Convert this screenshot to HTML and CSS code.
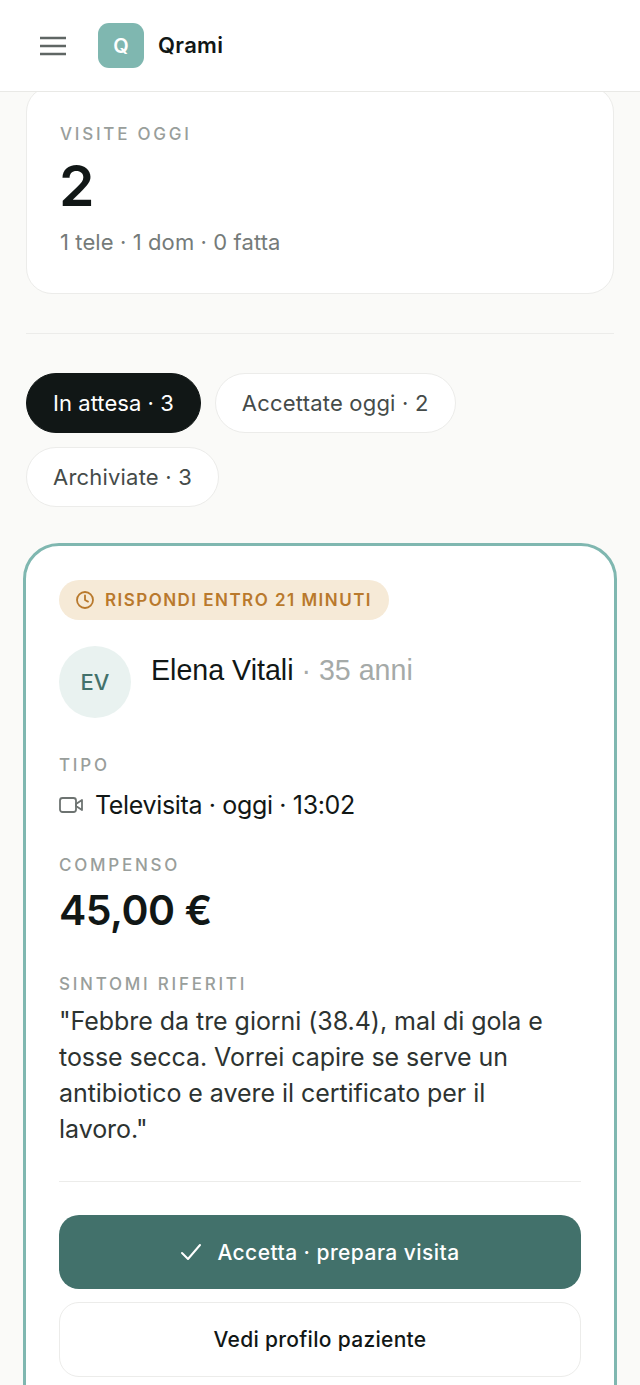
FILE: index.html
```html
<!DOCTYPE html>
<html lang="it">
<head>
<meta charset="utf-8">
<title>Qrami</title>
<link rel="stylesheet" href="styles.css">
</head>
<body>
<header class="topbar">
  <svg class="menu" width="26" height="20" viewBox="0 0 26 20" fill="none" stroke="#5f6664" stroke-width="2.4"><path d="M0 2h26M0 10h26M0 18h26"/></svg>
  <div class="logo">Q</div>
  <div class="brand">Qrami</div>
</header>
<main class="page">
  <section class="stat">
    <div class="label">VISITE OGGI</div>
    <div class="stat-num">2</div>
    <div class="stat-sub">1 tele · 1 dom · 0 fatta</div>
  </section>
  <hr class="rule">
  <nav class="tabs">
    <div class="tab tab-on">In attesa · 3</div>
    <div class="tab">Accettate oggi · 2</div>
    <div class="tab">Archiviate · 3</div>
  </nav>
  <article class="req">
    <div class="badge">
      <svg width="20" height="20" viewBox="0 0 20 20" fill="none" stroke="#b9792c" stroke-width="1.8" stroke-linecap="round" stroke-linejoin="round"><circle cx="10" cy="10" r="8"/><path d="M10 5.5V10l3 1.6"/></svg>
      <span>RISPONDI ENTRO 21 MINUTI</span>
    </div>
    <div class="person">
      <div class="avatar">EV</div>
      <div class="name">Elena Vitali <span class="age">· 35 anni</span></div>
    </div>
    <div class="label label-tipo">TIPO</div>
    <div class="type">
      <svg width="26" height="18" viewBox="0 0 26 18" fill="none" stroke="#6d7371" stroke-width="1.8" stroke-linejoin="round"><rect x="1" y="2" width="16" height="14" rx="2.5"/><path d="M17 8l6-4v10l-6-4z"/></svg>
      <span>Televisita · oggi · 13:02</span>
    </div>
    <div class="label label-comp">COMPENSO</div>
    <div class="price">45,00 €</div>
    <div class="label label-sint">SINTOMI RIFERITI</div>
    <p class="symptoms">"Febbre da tre giorni (38.4), mal di gola e tosse secca. Vorrei capire se serve un antibiotico e avere il certificato per il lavoro."</p>
    <hr class="rule rule-in">
    <button class="btn btn-main">
      <svg width="22" height="18" viewBox="0 0 22 18" fill="none" stroke="#fff" stroke-width="2" stroke-linecap="round" stroke-linejoin="round"><path d="M2 10l6 6L20 2"/></svg>
      <span>Accetta · prepara visita</span>
    </button>
    <button class="btn btn-alt">Vedi profilo paziente</button>
  </article>
</main>
</body>
</html>
```
FILE: styles.css
```css
* { box-sizing: border-box; }
html, body { margin: 0; height: 100%; }
body {
  height: 1385px;
  overflow: hidden;
  background: #fafaf8;
  font-family: "Inter", "Liberation Sans", sans-serif;
  color: #111716;
}
.topbar {
  position: relative;
  z-index: 2;
  height: 92px;
  background: #fff;
  border-bottom: 1px solid #e9e9e6;
  display: flex;
  align-items: center;
  padding-left: 40px;
}
.menu { margin-right: 32px; }
.logo {
  width: 46px;
  height: 45px;
  border-radius: 11px;
  background: #7fb7b0;
  color: #fff;
  font-weight: 600;
  font-size: 20px;
  display: flex;
  align-items: center;
  justify-content: center;
}
.brand { margin: -1px 0 0 14px; font-size: 22px; font-weight: 600; letter-spacing: 0.3px; }
.page { padding: 0 26px; margin-top: -6px; }
.stat {
  height: 208px;
  background: #fff;
  border: 1px solid #ececea;
  border-radius: 26px;
  padding: 36px 33px 0;
}
.label {
  font-size: 17px;
  line-height: 22px;
  letter-spacing: 2.75px;
  color: #999e9b;
  font-weight: 500;
}
.stat-num { font-size: 57px; line-height: 70px; font-weight: 600; margin-top: 6px; margin-left: -1px; }
.stat-sub { font-size: 22px; line-height: 28px; color: #757b79; margin-top: 7px; letter-spacing: 0.1px; }
.rule { border: 0; height: 1px; background: #ececea; margin: 39px 0; }
.tabs { display: flex; flex-wrap: wrap; gap: 14px; }
.tab {
  height: 60px;
  border-radius: 30px;
  background: #fff;
  border: 1px solid #ececea;
  padding: 0 26px;
  display: flex;
  align-items: center;
  font-size: 22px;
  color: #454b49;
  letter-spacing: 0.2px;
}
.tab-on { background: #111716; border-color: #111716; color: #fff; letter-spacing: 0.05px; }
.req {
  margin: 36px -3px 0;
  height: 900px;
  background: #fff;
  border: 3px solid #7fb7b0;
  border-radius: 36px;
  padding: 34px 33px 33px;
}
.badge {
  height: 40px;
  width: 330px;
  border-radius: 20px;
  background: #f6ead7;
  color: #b9792c;
  display: flex;
  align-items: center;
  gap: 10px;
  padding-left: 16px;
  font-size: 17px;
  font-weight: 600;
  letter-spacing: 1.47px;
}
.person { display: flex; gap: 20px; margin-top: 26px; height: 72px; }
.avatar {
  width: 72px;
  height: 72px;
  border-radius: 50%;
  background: #e9f2f0;
  color: #42716b;
  font-size: 22px;
  font-weight: 500;
  display: flex;
  align-items: center;
  justify-content: center;
}
.name { font-family: "Liberation Sans", sans-serif; font-size: 28.6px; line-height: 48px; }
.age { color: #a5aaa8; }
.label-tipo { margin-top: 36px; }
.type { display: flex; align-items: center; gap: 10px; margin-top: 11px; font-size: 25px; line-height: 36px; letter-spacing: -0.35px; }
.label-comp { margin-top: 31px; }
.price { font-size: 41px; line-height: 50px; font-weight: 600; margin-top: 9px; letter-spacing: -0.5px; }
.label-sint { margin-top: 38px; }
.symptoms { margin: 8px 0 0; max-width: 495px; font-size: 25px; line-height: 36px; color: #2d3331; letter-spacing: -0.05px; }
.rule-in { margin: 34px 0 33px; }
.btn {
  display: flex;
  width: 100%;
  align-items: center;
  justify-content: center;
  font-family: inherit;
  font-size: 21px;
  font-weight: 500;
  border-radius: 20px;
}
.btn-main { height: 74px; background: #42716b; color: #fff; border: 0; gap: 15px; letter-spacing: 0.45px; }
.btn-alt { height: 75px; margin-top: 13px; background: #fff; color: #111716; border: 1px solid #ececea; letter-spacing: 0.3px; }
```
